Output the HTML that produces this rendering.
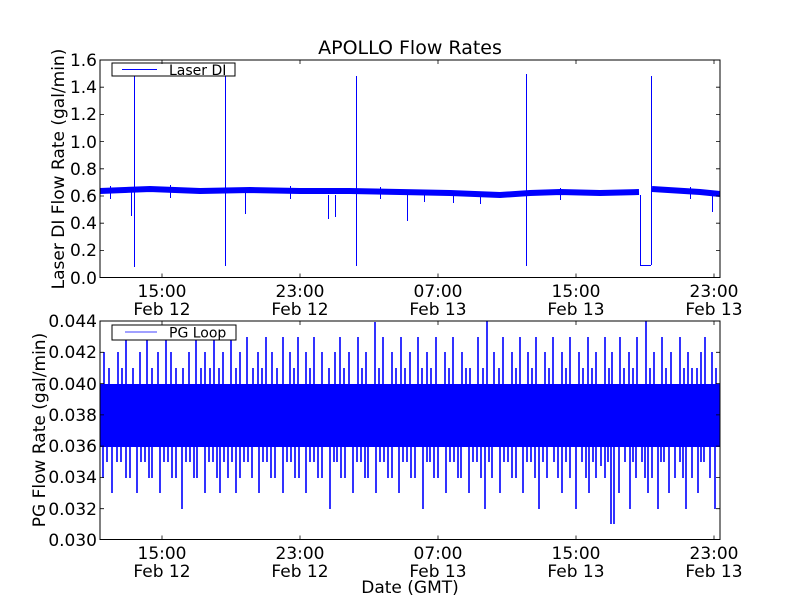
<!DOCTYPE html>
<html><head><meta charset="utf-8"><style>
body{margin:0;background:#fff;}
svg{display:block;font-family:"DejaVu Sans","Liberation Sans",sans-serif;}
</style></head><body>
<svg width="800" height="600" viewBox="0 0 800 600" xmlns="http://www.w3.org/2000/svg">
<rect width="800" height="600" fill="#fff"/>
<text x="410" y="54" font-size="19" text-anchor="middle">APOLLO Flow Rates</text>

<!-- TOP AXES -->
<g stroke="#0000ff" stroke-width="1" fill="none">
<path d="M100 191 L150 189 L200 191 L250 190 L300 191 L350 191 L400 192 L450 193 L500 195 L530 193 L560 192 L600 193 L639 192 M652 189 L700 192 L720 194" stroke-width="6"/>
<path d="M134.5 76V267 M225.5 76V266 M356.5 76V266 M526.5 74V266 M651.5 76V265 M640.5 195V265.5H651 M131.5 190V216 M245.5 192V214 M328.5 195V219 M335.5 195V217 M407.5 195V221 M712.5 194V212 M453.5 196V203 M480.5 197V204 M424.5 195V202 M110.5 186V199 M170.5 185V198 M290.5 186V199 M380.5 187V199 M560.5 188V200 M690.5 187V199"/>
</g>
<rect x="100" y="60" width="620" height="217.5" fill="none" stroke="#000" stroke-width="1"/>
<rect x="112" y="63" width="123" height="13" fill="#fff" stroke="#000"/>
<line x1="122" y1="69.5" x2="157" y2="69.5" stroke="#0000ff"/>
<text x="169" y="75" font-size="14">Laser DI</text>
<g stroke="#000" stroke-width="0.8">
<path d="M162 277.5v-4M300 277.5v-4M438 277.5v-4M576 277.5v-4M714 277.5v-4M162 60v4M300 60v4M438 60v4M576 60v4M714 60v4"/>
<path d="M100 87.2h4M100 114.4h4M100 141.6h4M100 168.8h4M100 196h4M100 223.2h4M100 250.4h4M720 87.2h-4M720 114.4h-4M720 141.6h-4M720 168.8h-4M720 196h-4M720 223.2h-4M720 250.4h-4"/>
</g>
<g font-size="17" text-anchor="end">
<text x="97" y="66">1.6</text><text x="97" y="93">1.4</text><text x="97" y="120">1.2</text><text x="97" y="148">1.0</text><text x="97" y="175">0.8</text><text x="97" y="202">0.6</text><text x="97" y="229">0.4</text><text x="97" y="256">0.2</text><text x="97" y="284">0.0</text>
</g>
<g font-size="17" text-anchor="middle">
<text x="162" y="297">15:00</text><text x="162" y="315">Feb 12</text>
<text x="300" y="297">23:00</text><text x="300" y="315">Feb 12</text>
<text x="438" y="297">07:00</text><text x="438" y="315">Feb 13</text>
<text x="576" y="297">15:00</text><text x="576" y="315">Feb 13</text>
<text x="714" y="297">23:00</text><text x="714" y="315">Feb 13</text>
</g>
<text transform="translate(64 169) rotate(-90)" font-size="17" text-anchor="middle">Laser DI Flow Rate (gal/min)</text>

<!-- BOTTOM AXES -->
<rect x="100" y="384" width="620" height="63" fill="#0000ff"/>
<g stroke="#0000ff" stroke-width="1.6">
<path d="M104 384V352M109 384V368M118 384V352M122 384V368M126 384V337M133 384V368M140 384V352M147 384V340M152 384V368M158 384V352M166 384V337M171 384V352M176 384V368M183 384V368M189 384V352M196 384V337M201 384V368M205 384V352M210 384V368M214 384V337M219 384V368M223 384V352M231 384V340M236 384V368M240 384V352M247 384V337M253 384V368M258 384V352M262 384V368M266 384V337M272 384V352M277 384V368M283 384V337M290 384V352M294 384V368M298 384V337M306 384V352M310 384V368M314 384V337M322 384V352M329 384V368M335 384V352M340 384V337M344 384V368M349 384V352M358 384V337M362 384V368M366 384V352M375 384V322M379 384V368M383 384V337M392 384V352M396 384V368M401 384V337M405 384V368M410 384V352M418 384V337M422 384V368M427 384V352M431 384V368M436 384V337M445 384V352M449 384V368M453 384V337M462 384V352M466 384V368M470 384V368M478 384V337M483 384V368M487 384V321M494 384V352M499 384V368M503 384V337M512 384V352M516 384V368M520 384V337M528 384V352M532 384V368M536 384V337M545 384V352M549 384V368M553 384V337M562 384V352M566 384V368M570 384V337M579 384V352M583 384V368M588 384V337M592 384V368M596 384V352M605 384V337M609 384V368M612 384V352M620 384V337M624 384V368M629 384V352M633 384V368M637 384V337M646 384V321M650 384V368M654 384V352M662 384V337M666 384V368M671 384V352M680 384V337M684 384V368M688 384V352M692 384V368M697 384V368M701 384V352M705 384V337M712 384V352M716 384V368"/>
<path d="M103 447V478M107 447V462M112 447V493M117 447V462M121 447V462M126 447V478M130 447V478M137 447V493M141 447V462M145 447V462M149 447V478M152 447V478M160 447V493M164 447V462M168 447V462M172 447V478M176 447V478M182 447V509M186 447V462M190 447V462M194 447V478M197 447V478M205 447V493M209 447V462M213 447V462M217 447V478M220 447V493M224 447V462M228 447V478M232 447V462M236 447V493M240 447V478M244 447V462M248 447V462M252 447V478M259 447V493M263 447V462M267 447V462M271 447V478M275 447V478M283 447V493M287 447V462M291 447V462M295 447V478M299 447V478M306 447V493M310 447V462M314 447V462M318 447V478M322 447V478M330 447V509M334 447V462M337 447V462M341 447V478M345 447V478M353 447V493M357 447V462M361 447V462M365 447V478M368 447V478M376 447V493M380 447V462M384 447V462M388 447V478M392 447V478M399 447V493M403 447V462M407 447V462M411 447V478M415 447V478M423 447V509M427 447V462M430 447V462M434 447V478M438 447V478M446 447V493M450 447V462M454 447V462M458 447V478M461 447V478M469 447V493M473 447V462M477 447V462M481 447V478M485 447V509M489 447V462M492 447V478M500 447V493M504 447V462M508 447V462M512 447V478M516 447V478M523 447V493M527 447V462M531 447V462M535 447V478M539 447V509M543 447V462M547 447V478M554 447V462M558 447V478M562 447V493M566 447V462M570 447V478M576 447V509M582 447V462M586 447V478M589 447V493M593 447V462M596 447V478M601 447V466M605 447V478M608 447V462M611 447V524M614 447V524M619 447V493M625 447V462M630 447V509M633 447V462M636 447V478M642 447V462M645 447V478M648 447V493M652 447V478M658 447V509M661 447V462M664 447V462M669 447V493M675 447V478M680 447V462M683 447V478M686 447V509M692 447V478M698 447V493M701 447V462M704 447V462M710 447V478M715 447V509"/>
</g>
<rect x="100" y="321" width="620" height="218.5" fill="none" stroke="#000" stroke-width="1"/>
<rect x="112" y="325" width="124" height="15" fill="#fff" stroke="#000"/>
<line x1="125" y1="332" x2="157" y2="332" stroke="#8080ff" stroke-width="1.5"/>
<text x="169" y="337.5" font-size="14">PG Loop</text>
<g stroke="#000" stroke-width="0.8">
<path d="M162 539.5v-4M300 539.5v-4M438 539.5v-4M576 539.5v-4M714 539.5v-4M162 321v4M300 321v4M438 321v4M576 321v4M714 321v4"/>
<path d="M100 352.3h4M100 383.6h4M100 414.9h4M100 446.1h4M100 477.4h4M100 508.7h4M720 352.3h-4M720 383.6h-4M720 414.9h-4M720 446.1h-4M720 477.4h-4M720 508.7h-4"/>
</g>
<g font-size="17" text-anchor="end">
<text x="97" y="327">0.044</text><text x="97" y="358">0.042</text><text x="97" y="390">0.040</text><text x="97" y="421">0.038</text><text x="97" y="452">0.036</text><text x="97" y="483">0.034</text><text x="97" y="515">0.032</text><text x="97" y="546">0.030</text>
</g>
<g font-size="17" text-anchor="middle">
<text x="162" y="559">15:00</text><text x="162" y="577">Feb 12</text>
<text x="300" y="559">23:00</text><text x="300" y="577">Feb 12</text>
<text x="438" y="559">07:00</text><text x="438" y="577">Feb 13</text>
<text x="576" y="559">15:00</text><text x="576" y="577">Feb 13</text>
<text x="714" y="559">23:00</text><text x="714" y="577">Feb 13</text>
</g>
<text x="410" y="593" font-size="17" text-anchor="middle">Date (GMT)</text>
<text transform="translate(45 430) rotate(-90)" font-size="17" text-anchor="middle">PG Flow Rate (gal/min)</text>
</svg>
</body></html>
